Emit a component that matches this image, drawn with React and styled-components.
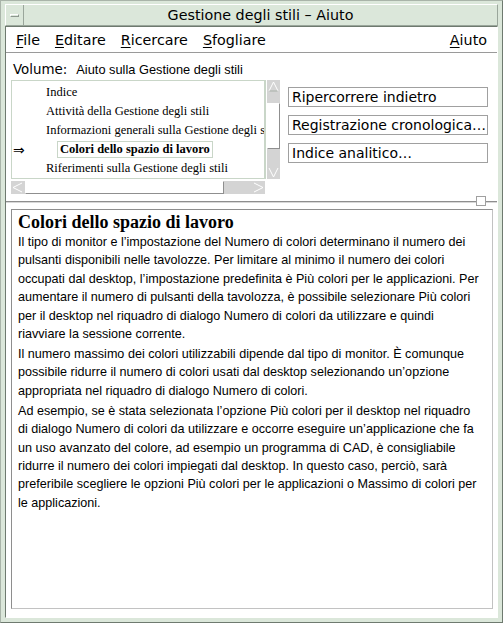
import React from "react";
import styled, { createGlobalStyle } from "styled-components";

const GlobalStyle = createGlobalStyle`
  html, body {
    margin: 0;
    padding: 0;
    background: #ffffff;
  }
  * {
    box-sizing: border-box;
  }
`;

const frameGreen = "#dbe7da";
const frameDark = "#6e7a6f";
const sans = `"DejaVu Sans", "Liberation Sans", sans-serif`;
const helv = `"Liberation Sans", Arial, sans-serif`;
const serif = `"Liberation Serif", "Times New Roman", serif`;

const topics = [
  { label: "Indice", indent: 30 },
  { label: "Attività della Gestione degli stili", indent: 30 },
  { label: "Informazioni generali sulla Gestione degli stili", indent: 30 },
  { label: "Colori dello spazio di lavoro", indent: 44, current: true },
  { label: "Riferimenti sulla Gestione degli stili", indent: 30 },
];

const paragraphs = [
  [
    "Il tipo di monitor e l’impostazione del Numero di colori determinano il numero dei",
    "pulsanti disponibili nelle tavolozze. Per limitare al minimo il numero dei colori",
    "occupati dal desktop, l’impostazione predefinita è Più colori per le applicazioni. Per",
    "aumentare il numero di pulsanti della tavolozza, è possibile selezionare Più colori",
    "per il desktop nel riquadro di dialogo Numero di colori da utilizzare e quindi",
    "riavviare la sessione corrente.",
  ],
  [
    "Il numero massimo dei colori utilizzabili dipende dal tipo di monitor. È comunque",
    "possibile ridurre il numero di colori usati dal desktop selezionando un’opzione",
    "appropriata nel riquadro di dialogo Numero di colori.",
  ],
  [
    "Ad esempio, se è stata selezionata l’opzione Più colori per il desktop nel riquadro",
    "di dialogo Numero di colori da utilizzare e occorre eseguire un’applicazione che fa",
    "un uso avanzato del colore, ad esempio un programma di CAD, è consigliabile",
    "ridurre il numero dei colori impiegati dal desktop. In questo caso, perciò, sarà",
    "preferibile scegliere le opzioni Più colori per le applicazioni o Massimo di colori per",
    "le applicazioni.",
  ],
];

export default function App() {
  return (
    <>
      <GlobalStyle />
      <Window>
        <TitleBar>
          <WindowMenuButton>
            <Dash />
          </WindowMenuButton>
          <Title>Gestione degli stili – Aiuto</Title>
        </TitleBar>
        <Client>
          <MenuBar>
            <MenuItem><u>F</u>ile</MenuItem>
            <MenuItem><u>E</u>ditare</MenuItem>
            <MenuItem><u>R</u>icercare</MenuItem>
            <MenuItem><u>S</u>fogliare</MenuItem>
            <MenuSpacer />
            <MenuItem><u>A</u>iuto</MenuItem>
          </MenuBar>

          <TopPane>
            <VolumeRow>
              <VolumeLabel>Volume:</VolumeLabel>
              <VolumeName>Aiuto sulla Gestione degli stili</VolumeName>
            </VolumeRow>
            <TopRow>
              <TopicArea>
                <TopicListRow>
                  <TopicList>
                    {topics.map((t) => (
                      <TopicItem key={t.label}>
                        <Pointer>{t.current ? "⇒" : ""}</Pointer>
                        <TopicLabel $indent={t.indent} $current={t.current}>
                          {t.label}
                        </TopicLabel>
                      </TopicItem>
                    ))}
                  </TopicList>
                  <VScroll>
                    <ArrowBtn>
                      <svg width="11" height="11" viewBox="0 0 11 11">
                        <path d="M1 10 L5.5 1 L10 10" fill="none" stroke="#fff" />
                        <path d="M1.5 10 L9.5 10" stroke="#a8b0a8" />
                      </svg>
                    </ArrowBtn>
                    <VTrack>
                      <VThumb />
                    </VTrack>
                    <ArrowBtn>
                      <svg width="11" height="11" viewBox="0 0 11 11">
                        <path d="M1 1 L5.5 10 L10 1" fill="none" stroke="#fff" />
                      </svg>
                    </ArrowBtn>
                  </VScroll>
                </TopicListRow>
                <HScroll>
                  <HArrow>
                    <svg width="11" height="11" viewBox="0 0 11 11">
                      <path d="M10 1 L1 5.5 L10 10" fill="none" stroke="#fff" />
                    </svg>
                  </HArrow>
                  <HTrack>
                    <HThumb />
                  </HTrack>
                  <HArrow>
                    <svg width="11" height="11" viewBox="0 0 11 11">
                      <path d="M1 1 L10 5.5 L1 10" fill="none" stroke="#fff" />
                    </svg>
                  </HArrow>
                </HScroll>
              </TopicArea>
              <ButtonColumn>
                <NavButton>Ripercorrere indietro</NavButton>
                <NavButton>Registrazione cronologica…</NavButton>
                <NavButton>Indice analitico…</NavButton>
              </ButtonColumn>
            </TopRow>
          </TopPane>

          <Sash>
            <SashHandle />
          </Sash>

          <TextPane>
            <Heading>Colori dello spazio di lavoro</Heading>
            {paragraphs.map((lines, i) => (
              <Para key={i}>
                {lines.map((l) => (
                  <Line key={l}>{l}</Line>
                ))}
              </Para>
            ))}
          </TextPane>
        </Client>
      </Window>
    </>
  );
}

const Window = styled.div`
  width: 503px;
  height: 623px;
  background: ${frameGreen};
  border: 1px solid #a9b4a9;
  border-right-color: ${frameDark};
  border-bottom-color: ${frameDark};
  padding: 3px 4px 4px 4px;
  display: flex;
  flex-direction: column;
`;

const TitleBar = styled.div`
  height: 22px;
  display: flex;
  align-items: stretch;
  border: 1px solid #ffffff;
  border-right-color: #9aa69b;
  border-bottom-color: #9aa69b;
`;

const WindowMenuButton = styled.div`
  width: 18px;
  display: flex;
  align-items: center;
  justify-content: center;
  border-right: 1px solid #9aa69b;
`;

const Dash = styled.div`
  width: 9px;
  height: 3px;
  border: 1px solid #ffffff;
  border-right-color: #8d978e;
  border-bottom-color: #8d978e;
`;

const Title = styled.div`
  flex: 1;
  text-align: center;
  font-family: ${sans};
  font-size: 14.3px;
  line-height: 20px;
  color: #000;
`;

const Client = styled.div`
  flex: 1;
  background: #ffffff;
  border: 1px solid ${frameDark};
  border-right-color: #ffffff;
  border-bottom-color: #ffffff;
  display: flex;
  flex-direction: column;
  padding-bottom: 8px;
`;

const MenuBar = styled.div`
  height: 26px;
  display: flex;
  align-items: center;
  padding: 0 10px 0 10px;
  gap: 15px;
  border-bottom: 1px solid #9a9a9a;
  font-family: ${sans};
  font-size: 14.3px;
`;

const MenuItem = styled.span`
  color: #000;
  u {
    text-underline-offset: 2px;
  }
`;

const MenuSpacer = styled.div`
  flex: 1;
`;

const TopPane = styled.div`
  padding: 9px 8px 0 5px;
`;

const VolumeRow = styled.div`
  display: flex;
  align-items: baseline;
  gap: 9px;
  padding-left: 2px;
  height: 16px;
`;

const VolumeLabel = styled.span`
  font-family: ${sans};
  font-size: 13.4px;
  color: #000;
`;

const VolumeName = styled.span`
  font-family: ${helv};
  font-size: 12.8px;
  color: #000;
`;

const TopRow = styled.div`
  display: flex;
  gap: 8px;
  margin-top: 2px;
`;

const TopicArea = styled.div`
  width: 269px;
  display: flex;
  flex-direction: column;
  gap: 2px;
`;

const TopicListRow = styled.div`
  display: flex;
  gap: 1px;
  height: 99px;
`;

const TopicList = styled.ul`
  flex: 1;
  margin: 0;
  padding: 2px 0 0 0;
  list-style: none;
  overflow: hidden;
  border: 1px solid #c9d6c8;
  border-right-width: 2px;
`;

const TopicItem = styled.li`
  display: flex;
  align-items: center;
  height: 19px;
  white-space: nowrap;
`;

const Pointer = styled.span`
  width: 0;
  padding-left: 1px;
  font-family: ${sans};
  font-size: 14px;
  color: #000;
  overflow: visible;
`;

const TopicLabel = styled.span`
  margin-left: ${(p) => p.$indent}px;
  font-family: ${serif};
  font-size: 12.5px;
  font-weight: ${(p) => (p.$current ? 700 : 400)};
  color: #000;
  padding: 0 2px;
  border: 1px solid ${(p) => (p.$current ? "#c9d6c8" : "transparent")};
`;

const VScroll = styled.div`
  width: 13px;
  display: flex;
  flex-direction: column;
  background: #d4d4d4;
`;

const ArrowBtn = styled.div`
  height: 13px;
  display: flex;
  align-items: center;
  justify-content: center;
  background: #d4d4d4;
`;

const VTrack = styled.div`
  flex: 1;
  padding: 10px 0 17px 0;
  display: flex;
`;

const VThumb = styled.div`
  flex: 1;
  background: #ffffff;
  border: 1px solid #ffffff;
  border-right-color: #8f8f8f;
  border-bottom-color: #8f8f8f;
`;

const HScroll = styled.div`
  width: 254px;
  height: 13px;
  display: flex;
  background: #d4d4d4;
`;

const HArrow = styled.div`
  width: 13px;
  display: flex;
  align-items: center;
  justify-content: center;
`;

const HTrack = styled.div`
  flex: 1;
  padding: 0 28px 0 1px;
  display: flex;
`;

const HThumb = styled.div`
  flex: 1;
  background: #ffffff;
  border: 1px solid #ffffff;
  border-right-color: #8f8f8f;
  border-bottom-color: #8f8f8f;
`;

const ButtonColumn = styled.div`
  padding-top: 7px;
  display: flex;
  flex-direction: column;
  gap: 8px;
  width: 200px;
`;

const NavButton = styled.button`
  height: 20px;
  padding: 0 3px;
  text-align: left;
  background: #ffffff;
  border: 1px solid #a0a0a0;
  border-radius: 0;
  font-family: ${sans};
  font-size: 14px;
  color: #000;
  white-space: nowrap;
  overflow: hidden;
`;

const Sash = styled.div`
  position: relative;
  margin: 7px 0 6px 0;
  height: 2px;
  border-top: 1px solid #8e8e8e;
  border-bottom: 1px solid #d8d8d8;
`;

const SashHandle = styled.div`
  position: absolute;
  right: 11px;
  top: -6px;
  width: 10px;
  height: 10px;
  background: #ffffff;
  border: 1px solid #a0a0a0;
`;

const TextPane = styled.div`
  flex: 1;
  margin: 0 4px 0 5px;
  padding: 1px 6px 4px 6px;
  border: 1px solid #c2c2c2;
  border-left-color: #8e8e8e;
  border-top-color: #8e8e8e;
  overflow: hidden;
`;

const Heading = styled.h1`
  margin: 0;
  font-family: ${serif};
  font-size: 18px;
  font-weight: 700;
  line-height: 22px;
  color: #000;
`;

const Para = styled.p`
  margin: 0 0 1.6px 0;
  font-family: ${helv};
  font-size: 12.6px;
  line-height: 18.4px;
  color: #000;
`;

const Line = styled.span`
  display: block;
  white-space: nowrap;
`;
